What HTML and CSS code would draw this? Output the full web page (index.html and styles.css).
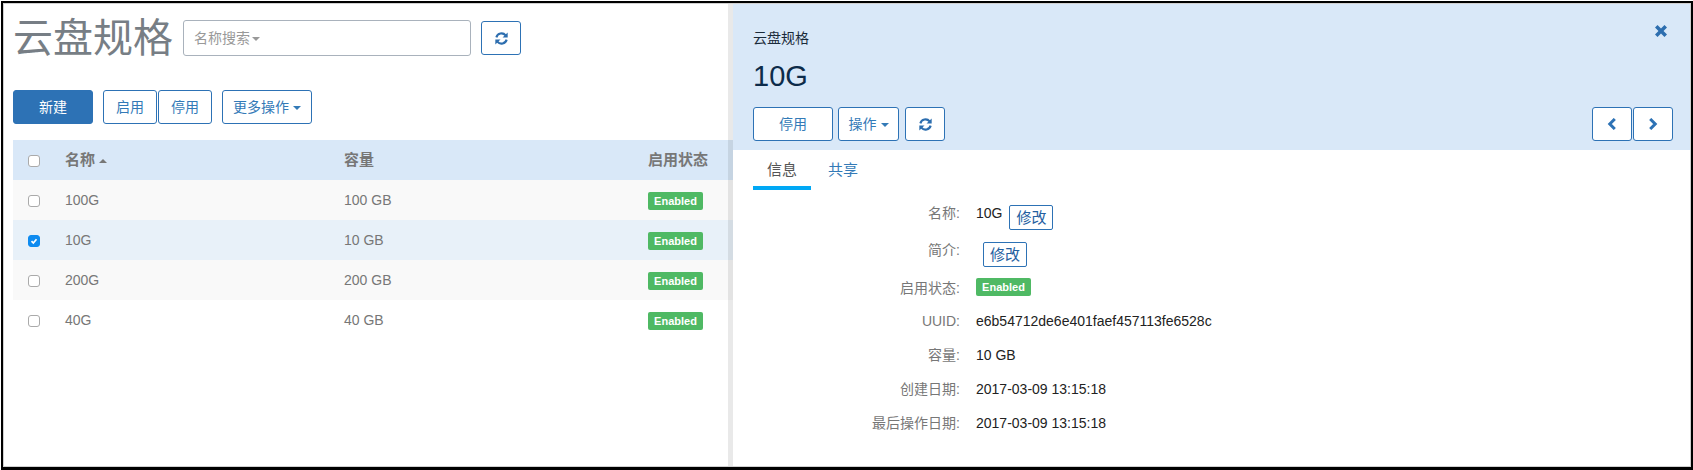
FILE: index.html
```html
<!DOCTYPE html>
<html lang="zh">
<head>
<meta charset="utf-8">
<title>云盘规格</title>
<link rel="stylesheet" href="styles.css">
</head>
<body>
<div class="frame">
  <section class="list">
    <div class="head">
      <h1 class="title">云盘规格</h1>
      <div class="search">名称搜索<i class="caret caret-gray"></i></div>
      <button class="btn btn-icon"><svg class="ico" viewBox="0 0 16 16"><path class="arc" d="M2.5 6.8A5.7 5.7 0 0 1 12.4 4.7"/><path class="tip" d="M14.6 1.5V7H9.1z"/><path class="arc" d="M13.5 9.2A5.7 5.7 0 0 1 3.6 11.3"/><path class="tip" d="M1.4 14.5V9h5.5z"/></svg></button>
    </div>
    <div class="tools">
      <button class="btn btn-primary btn-new">新建</button>
      <div class="pair">
        <button class="btn btn-w54">启用</button>
        <button class="btn btn-w54">停用</button>
      </div>
      <button class="btn btn-more">更多操作<i class="caret"></i></button>
    </div>
    <table class="grid">
      <thead>
        <tr><th class="c-check"><span class="cb"></span></th><th class="c-name">名称<i class="caret caret-up"></i></th><th class="c-size">容量</th><th>启用状态</th></tr>
      </thead>
      <tbody>
        <tr class="odd"><td class="c-check"><span class="cb"></span></td><td>100G</td><td>100 GB</td><td><span class="badge">Enabled</span></td></tr>
        <tr class="sel"><td class="c-check"><span class="cb cb-on"><svg viewBox="0 0 12 12"><path d="M3 6.2l2.2 2.3L9 3.8"/></svg></span></td><td>10G</td><td>10 GB</td><td><span class="badge">Enabled</span></td></tr>
        <tr class="odd"><td class="c-check"><span class="cb"></span></td><td>200G</td><td>200 GB</td><td><span class="badge">Enabled</span></td></tr>
        <tr><td class="c-check"><span class="cb"></span></td><td>40G</td><td>40 GB</td><td><span class="badge">Enabled</span></td></tr>
      </tbody>
    </table>
    <div class="gutter"></div>
  </section>
  <section class="detail">
    <header class="dhead">
      <svg class="close" viewBox="1.5 1.5 9 9"><path d="M1.5 3.4L3.4 1.5 6 4.1l2.6-2.6 1.9 1.9L7.9 6l2.6 2.6-1.9 1.9L6 7.9l-2.6 2.6-1.9-1.9L4.1 6z"/></svg>
      <div class="crumb">云盘规格</div>
      <h2 class="name">10G</h2>
      <div class="dtools">
        <button class="btn btn-new">停用</button>
        <button class="btn btn-op">操作<i class="caret"></i></button>
        <button class="btn btn-icon"><svg class="ico" viewBox="0 0 16 16"><path class="arc" d="M2.5 6.8A5.7 5.7 0 0 1 12.4 4.7"/><path class="tip" d="M14.6 1.5V7H9.1z"/><path class="arc" d="M13.5 9.2A5.7 5.7 0 0 1 3.6 11.3"/><path class="tip" d="M1.4 14.5V9h5.5z"/></svg></button>
        <div class="pager">
          <button class="btn btn-icon"><svg class="chev" viewBox="0 0 10 12"><path d="M7.8 1L2.8 6l5 5"/></svg></button>
          <button class="btn btn-icon"><svg class="chev" viewBox="0 0 10 12"><path d="M2.2 1l5 5-5 5"/></svg></button>
        </div>
      </div>
    </header>
    <nav class="tabs">
      <a class="tab tab-on">信息</a>
      <a class="tab">共享</a>
    </nav>
    <dl class="info">
      <div class="row row-edit"><dt>名称:</dt><dd>10G<button class="edit">修改</button></dd></div>
      <div class="row row-edit2"><dt>简介:</dt><dd><button class="edit">修改</button></dd></div>
      <div class="row row-badge"><dt>启用状态:</dt><dd><span class="badge">Enabled</span></dd></div>
      <div class="row"><dt>UUID:</dt><dd>e6b54712de6e401faef457113fe6528c</dd></div>
      <div class="row"><dt>容量:</dt><dd>10 GB</dd></div>
      <div class="row"><dt>创建日期:</dt><dd>2017-03-09 13:15:18</dd></div>
      <div class="row"><dt>最后操作日期:</dt><dd>2017-03-09 13:15:18</dd></div>
    </dl>
  </section>
</div>
</body>
</html>
```
FILE: styles.css
```css
* { box-sizing: border-box; }
html, body { margin: 0; padding: 0; background: #fff; }
body {
  padding: 1px 0 0 1px;
  height: 470px;
  overflow: hidden;
  font: 14px/20px "Liberation Sans", "Noto Sans CJK SC", sans-serif;
  color: #777;
}
.frame {
  display: flex;
  width: 1692px;
  height: 469px;
  border: 2px solid #000;
  border-bottom-width: 3px;
  padding: 1px;
  background: #d0d0d0;
}
.list {
  position: relative;
  width: 729px;
  flex: none;
  padding: 16px 0 0 9px;
  background: #fff;
}
.head { display: flex; align-items: center; height: 36px; }
.title {
  width: 170px;
  margin: 0;
  font-size: 40px;
  line-height: 38px;
  font-weight: 400;
  color: #777e85;
  white-space: nowrap;
}
.search {
  width: 288px;
  height: 36px;
  margin-right: 10px;
  padding-left: 10px;
  border: 1px solid #a9b2bc;
  border-radius: 3px;
  line-height: 35px;
  color: #999;
}
.btn {
  height: 34px;
  padding: 0;
  border: 1px solid #2d72b5;
  border-radius: 3px;
  background: #fff;
  color: #337ab7;
  font: inherit;
  flex: none;
}
.btn-icon { display: inline-flex; align-items: center; justify-content: center; width: 40px; }
.ico { width: 15px; height: 15px; }
.arc { fill: none; stroke: #2d6eaf; stroke-width: 2.3; }
.tip { fill: #2d6eaf; }
.chev { width: 10px; height: 12px; fill: none; stroke: #2d72b5; stroke-width: 3; }
.caret {
  display: inline-block;
  margin-left: 4px;
  vertical-align: middle;
  border-top: 4px solid #337ab7;
  border-left: 4px solid transparent;
  border-right: 4px solid transparent;
}
.caret-gray { border-top-color: #999; margin-left: 2px; }
.caret-up { border-top: 0; border-bottom: 4px solid #777; }
.tools { display: flex; margin-top: 34px; }
.btn-new { width: 80px; }
.btn-primary { background: #2d72b5; color: #fff; }
.pair { display: flex; gap: 1px; margin: 0 10px; }
.btn-w54 { width: 54px; }
.btn-more { width: 90px; }
.grid {
  width: 720px;
  margin-top: 16px;
  border-collapse: collapse;
  table-layout: fixed;
}
.grid th, .grid td { height: 40px; padding: 0; text-align: left; vertical-align: middle; }
.grid th { font-size: 15px; font-weight: 700; background: #d9e8f8; color: #777; }
.c-check { width: 52px; padding-left: 15px !important; }
.c-name { width: 279px; }
.c-size { width: 304px; }
.odd td { background: #f9f9f9; }
.sel td { background: #e8f1f9; }
.cb {
  display: block;
  width: 12px;
  height: 12px;
  margin-top: 1px;
  border: 1px solid #aaa;
  border-radius: 3px;
  background: #fff;
}
.cb-on { border-color: #0d8bf0; background: #0d8bf0; }
.cb-on svg { display: block; width: 10px; height: 10px; fill: none; stroke: #fff; stroke-width: 2; }
.badge {
  display: block;
  width: 55px;
  height: 18px;
  border-radius: 2px;
  background: #4fb964;
  color: #fff;
  font-size: 11px;
  font-weight: 700;
  line-height: 18px;
  text-align: center;
}
.grid .badge { margin-top: 1px; }
.gutter {
  position: absolute;
  top: 0;
  right: 0;
  bottom: 0;
  width: 5px;
  background: rgba(0, 0, 0, .085);
}
.detail { flex: 1; background: #fff; }
.dhead {
  position: relative;
  height: 146px;
  padding: 24px 17px 0 20px;
  background: #d9e8f8;
}
.close { position: absolute; top: 21px; right: 23px; width: 12px; height: 12px; fill: #2d6eaf; }
.crumb { color: #1a2a3a; }
.name {
  margin: 8px 0 0;
  font-size: 29px;
  line-height: 40px;
  font-weight: 400;
  color: #0d2b4a;
}
.dtools { display: flex; margin-top: 11px; }
.btn-op { width: 61px; margin: 0 6px 0 5px; }
.pager { display: flex; gap: 1px; margin-left: auto; }
.pager .btn { width: 40px; }
.tabs { display: flex; gap: 3px; height: 40px; padding-left: 20px; }
.tab {
  display: block;
  padding: 10px 14px 0;
  font-size: 15px;
  color: #337ab7;
}
.tab-on { color: #555; border-bottom: 4px solid #00a8f5; }
.info { margin: 13px 0 0; }
.row { display: flex; height: 34px; }
.row-edit { height: 37px; }
.row-edit2 { height: 38px; }
.row-badge { height: 33px; }
.row dt { width: 227px; text-align: right; color: #777; }
.row dd { margin: 0 0 0 16px; color: #222; display: flex; align-items: flex-start; }
.edit {
  width: 44px;
  height: 25px;
  margin: 2px 0 0 7px;
  padding: 0;
  border: 1px solid #2d72b5;
  border-radius: 2px;
  background: #fff;
  color: #24609f;
  font: 15px/21px "Liberation Sans", "Noto Sans CJK SC", sans-serif;
}
```
